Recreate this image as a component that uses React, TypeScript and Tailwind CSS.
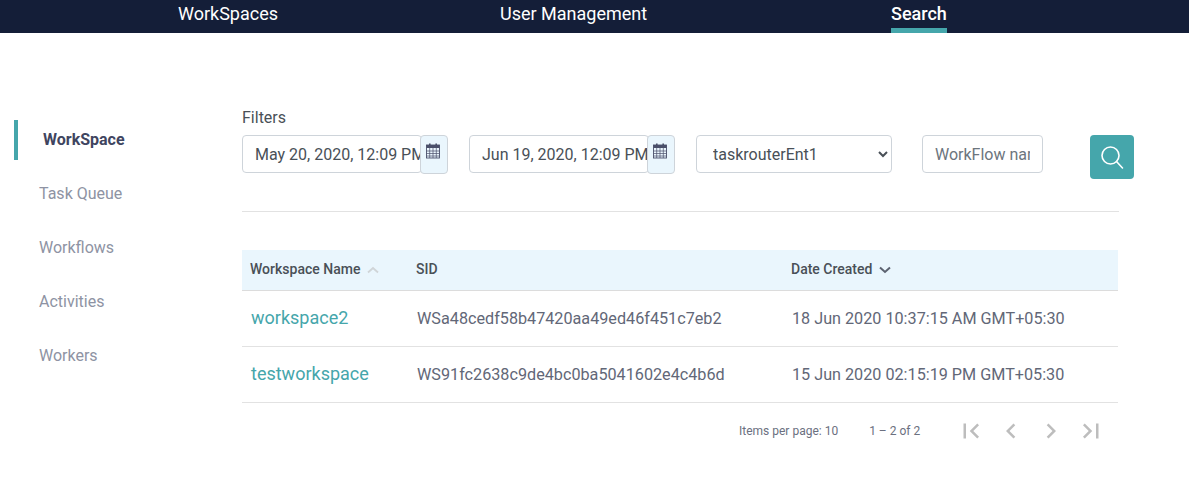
const tabs = [
  { label: 'WorkSpaces', className: 'w-[500px] pl-[178px]' },
  { label: 'User Management', className: 'w-[391px]' },
  { label: 'Search', active: true, className: '' },
];

const sideItems = ['Task Queue', 'Workflows', 'Activities', 'Workers'];

const rows = [
  { name: 'workspace2', sid: 'WSa48cedf58b47420aa49ed46f451c7eb2', created: '18 Jun 2020 10:37:15 AM GMT+05:30' },
  { name: 'testworkspace', sid: 'WS91fc2638c9de4bc0ba5041602e4c4b6d', created: '15 Jun 2020 02:15:19 PM GMT+05:30' },
];

function CalendarIcon() {
  return (
    <svg width="14" height="16" viewBox="0 0 14 16" className="text-[#4a4f6a]">
      <path fill="currentColor" d="M3 0.5h1.6v2.5H3zM9.4 0.5H11v2.5H9.4z" />
      <rect x="0.5" y="2" width="13" height="13" fill="none" stroke="currentColor" strokeWidth="0.9" />
      <rect x="0.5" y="2" width="13" height="3" fill="currentColor" />
      <path stroke="currentColor" strokeWidth="0.7" d="M0.5 8h13M0.5 10.5h13M0.5 13h13M3.7 5v10M7 5v10M10.3 5v10" />
    </svg>
  );
}

function DateField({ value }: { value: string }) {
  return (
    <div className="flex w-[206px] shrink-0 items-start">
      <input
        readOnly
        value={value}
        className="h-[38px] min-w-0 flex-1 rounded border border-[#ced4da] bg-white pl-[12px] pr-0 text-[16px] text-[#495057] outline-none"
      />
      <button className="-ml-[2px] flex h-[39px] w-[28px] shrink-0 justify-center rounded border border-[#ced4da] bg-[#eaf6fd] pr-[2px] pt-[7px]">
        <CalendarIcon />
      </button>
    </div>
  );
}

function PagerIcon({ d }: { d: string }) {
  return (
    <svg width="30" height="30" viewBox="0 0 24 24" fill="#bdbdbd">
      <path d={d} />
    </svg>
  );
}

export default function App() {
  return (
    <div className="h-[496px] w-[1189px] overflow-hidden bg-white font-['Roboto',sans-serif]">
      <nav className="flex h-[33px] bg-[#141e38] text-[18px] text-white">
        {tabs.map((tab) => (
          <div key={tab.label} className={tab.className}>
            <div
              className={`h-[33px] w-fit leading-[28px] ${
                tab.active ? 'border-b-[5px] border-[#45a6ab] font-medium' : ''
              }`}
            >
              {tab.label}
            </div>
          </div>
        ))}
      </nav>

      <div className="flex pt-[87px]">
        <aside className="w-[242px] shrink-0 pl-[14px] text-[16px] text-[#8e93a3]">
          <div className="flex h-[40px] items-center border-l-4 border-[#45a6ab] pl-[25px] font-bold text-[#3f4560]">
            WorkSpace
          </div>
          <ul className="pt-[7px]">
            {sideItems.map((item) => (
              <li key={item} className="flex h-[54px] items-center pl-[25px]">
                {item}
              </li>
            ))}
          </ul>
        </aside>

        <main className="w-[877px]">
          <div className="-mt-[16px] h-[31px] text-[16px] leading-[28px] text-[#495057]">Filters</div>
          <div className="flex h-[77px] items-start border-b border-[#e2e2e2]">
            <DateField value="May 20, 2020, 12:09 PM" />
            <div className="w-[21px] shrink-0" />
            <DateField value="Jun 19, 2020, 12:09 PM" />
            <div className="w-[21px] shrink-0" />
            <select className="h-[38px] w-[196px] shrink-0 rounded border border-[#ced4da] bg-white pl-[12px] text-[16px] text-[#495057] outline-none">
              <option>taskrouterEnt1</option>
            </select>
            <input
              placeholder="WorkFlow name"
              className="ml-[30px] h-[38px] w-[121px] shrink-0 rounded border border-[#ced4da] bg-white px-[12px] text-[16px] text-[#495057] outline-none placeholder:text-[#6c757d]"
            />
            <button className="ml-[47px] flex h-[44px] w-[44px] shrink-0 items-center justify-center rounded bg-[#45a6ab]">
              <svg width="26" height="26" viewBox="0 0 26 26" fill="none" stroke="white" strokeWidth="1.6">
                <circle cx="11.5" cy="11.5" r="8.5" />
                <path d="M17.5 17.5l6 6.5" strokeLinecap="round" />
              </svg>
            </button>
          </div>

          <table className="mt-[38px] w-[876px] table-fixed border-collapse text-left">
            <thead>
              <tr className="h-[40px] border-b border-[#dcdcdc] bg-[#eaf6fd] text-[14px] text-[#495057]">
                <th className="w-[174px] pl-[8px] font-medium">
                  <span className="flex items-center gap-[7px]">
                    Workspace Name
                    <svg width="12" height="8" viewBox="0 0 12 8" fill="none" stroke="#d0d5d8" strokeWidth="1.8">
                      <path d="M1 6.5L6 2l5 4.5" />
                    </svg>
                  </span>
                </th>
                <th className="w-[375px] font-medium">SID</th>
                <th className="font-medium">
                  <span className="flex items-center gap-[7px]">
                    Date Created
                    <svg width="12" height="8" viewBox="0 0 12 8" fill="none" stroke="#5c6270" strokeWidth="2">
                      <path d="M1 1.5L6 6l5-4.5" />
                    </svg>
                  </span>
                </th>
              </tr>
            </thead>
            <tbody>
              {rows.map((row) => (
                <tr key={row.sid} className="h-[56px] border-b border-[#e2e2e2] text-[16.2px] text-[#626777]">
                  <td className="pb-[2px] pl-[9px] text-[18px] text-[#45a6ab]">{row.name}</td>
                  <td className="pl-px pt-[2px]">{row.sid}</td>
                  <td className="pl-px pt-[2px]">{row.created}</td>
                </tr>
              ))}
            </tbody>
          </table>

          <div className="flex h-[56px] items-center text-[12px] text-[#6b7080]">
            <span className="ml-[497px]">Items per page: 10</span>
            <span className="ml-[31px]">1 – 2 of 2</span>
            <div className="ml-[36px] flex gap-[10px]">
              <PagerIcon d="M18.41 16.59L13.82 12l4.59-4.59L17 6l-6 6 6 6zM6 6h2v12H6z" />
              <PagerIcon d="M15.41 7.41L14 6l-6 6 6 6 1.41-1.41L10.83 12z" />
              <PagerIcon d="M10 6L8.59 7.41 13.17 12l-4.58 4.59L10 18l6-6z" />
              <PagerIcon d="M5.59 7.41L10.18 12l-4.59 4.59L7 18l6-6-6-6zM16 6h2v12h-2z" />
            </div>
          </div>
        </main>
      </div>
    </div>
  );
}
